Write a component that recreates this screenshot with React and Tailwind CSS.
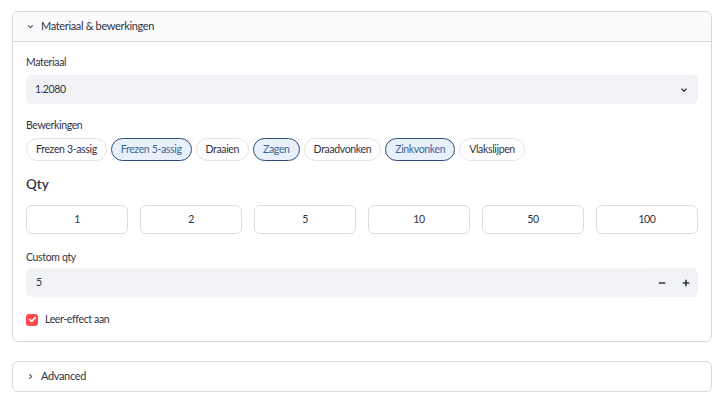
import { useState } from 'react'

const font = { fontFamily: 'Lato, "Noto Sans", sans-serif' }

const Chevron = ({ dir = 'down', className = '' }) => (
  <svg viewBox="0 0 16 16" className={className} fill="none" stroke="currentColor" strokeWidth="2" strokeLinecap="round" strokeLinejoin="round">
    {dir === 'down' ? <path d="M4.5 6.5 8 10l3.5-3.5" /> : <path d="M6.5 4.5 10 8l-3.5 3.5" />}
  </svg>
)

const BEWERKINGEN = ['Frezen 3-assig', 'Frezen 5-assig', 'Draaien', 'Zagen', 'Draadvonken', 'Zinkvonken', 'Vlakslijpen']
const QTYS = [1, 2, 5, 10, 50, 100]

export default function App() {
  const [selected, setSelected] = useState(['Frezen 5-assig', 'Zagen', 'Zinkvonken'])
  const [qty, setQty] = useState(5)
  const [leer, setLeer] = useState(true)

  const toggle = (b) =>
    setSelected((s) => (s.includes(b) ? s.filter((x) => x !== b) : [...s, b]))

  return (
    <div className="w-[727px] h-[420px] bg-white pt-[11px] pl-[12px] pr-[15px] text-[#31333f] tracking-[-0.35px]" style={font}>
      {/* Expander 1 */}
      <div className="border border-[#d9d9dc] rounded-md overflow-hidden">
        <div className="h-[30px] flex items-center bg-[#fafafa] border-b border-[#d9d9dc] pl-[13px] gap-[6px]">
          <Chevron className="w-[9px] h-[9px] text-[#555]" />
          <span className="text-[11px]">Materiaal &amp; bewerkingen</span>
        </div>
        <div className="px-[13px] pt-[12px] pb-[13px]">
          <div className="text-[10.5px] leading-[16px]">Materiaal</div>
          <div className="mt-[5px] h-[29px] bg-[#f0f2f6] rounded-md flex items-center justify-between px-[9px]">
            <span className="text-[10.5px]">1.2080</span>
            <Chevron className="w-[10px] h-[10px] text-[#31333f]" />
          </div>

          <div className="mt-[13px] text-[10.5px] leading-[16px]">Bewerkingen</div>
          <div className="mt-[5px] flex gap-[4px]">
            {BEWERKINGEN.map((b) => {
              const on = selected.includes(b)
              return (
                <button
                  key={b}
                  onClick={() => toggle(b)}
                  className={`h-[23px] px-[9px] rounded-full border text-[10.5px] leading-none ${
                    on ? 'bg-[#e8f1fb] border-[#2b4c74] text-[#3a6595]' : 'bg-white border-[#e3e3e6] text-[#31333f]'
                  }`}
                >
                  {b}
                </button>
              )
            })}
          </div>

          <div className="mt-[13px] text-[13.5px] leading-[20px] font-semibold tracking-normal">Qty</div>
          <div className="mt-[11px] grid grid-cols-6 gap-[12px]">
            {QTYS.map((q) => (
              <button
                key={q}
                onClick={() => setQty(q)}
                className="h-[29px] rounded-md border border-[#dcdce0] bg-white text-[10.5px]"
              >
                {q}
              </button>
            ))}
          </div>

          <div className="mt-[15px] text-[10.5px] leading-[16px]">Custom qty</div>
          <div className="mt-[3px] h-[29px] flex rounded-md bg-[#f0f2f6] overflow-hidden">
            <div className="flex-1 flex items-center px-[10px] border-y border-[#f7f8fa]">
              <span className="text-[10.5px]">{qty}</span>
            </div>
            <button onClick={() => setQty((v) => Math.max(0, v - 1))} className="w-[24px] flex items-center justify-center text-[#31333f]">
              <svg viewBox="0 0 10 10" className="w-[8px] h-[8px]"><path d="M1 5h8" stroke="currentColor" strokeWidth="2" /></svg>
            </button>
            <button onClick={() => setQty((v) => v + 1)} className="w-[24px] flex items-center justify-center text-[#31333f]">
              <svg viewBox="0 0 10 10" className="w-[8px] h-[8px]"><path d="M1 5h8M5 1v8" stroke="currentColor" strokeWidth="2" /></svg>
            </button>
          </div>

          <label className="mt-[15px] flex items-center gap-[7px] cursor-pointer" onClick={() => setLeer((v) => !v)}>
            <span className={`w-[12px] h-[12px] rounded-[3px] flex items-center justify-center ${leer ? 'bg-[#ff4b4b]' : 'border border-[#bbb]'}`}>
              {leer && (
                <svg viewBox="0 0 12 12" className="w-[9px] h-[9px]" fill="none" stroke="white" strokeWidth="2" strokeLinecap="round" strokeLinejoin="round">
                  <path d="M2.5 6.2 5 8.5l4.5-5" />
                </svg>
              )}
            </span>
            <span className="text-[10.5px]">Leer-effect aan</span>
          </label>
        </div>
      </div>

      {/* Expander 2 */}
      <div className="mt-[19px] border border-[#d9d9dc] rounded-md h-[31px] flex items-center pl-[13px] gap-[6px]">
        <Chevron dir="right" className="w-[9px] h-[9px] text-[#555]" />
        <span className="text-[11px]">Advanced</span>
      </div>
    </div>
  )
}
